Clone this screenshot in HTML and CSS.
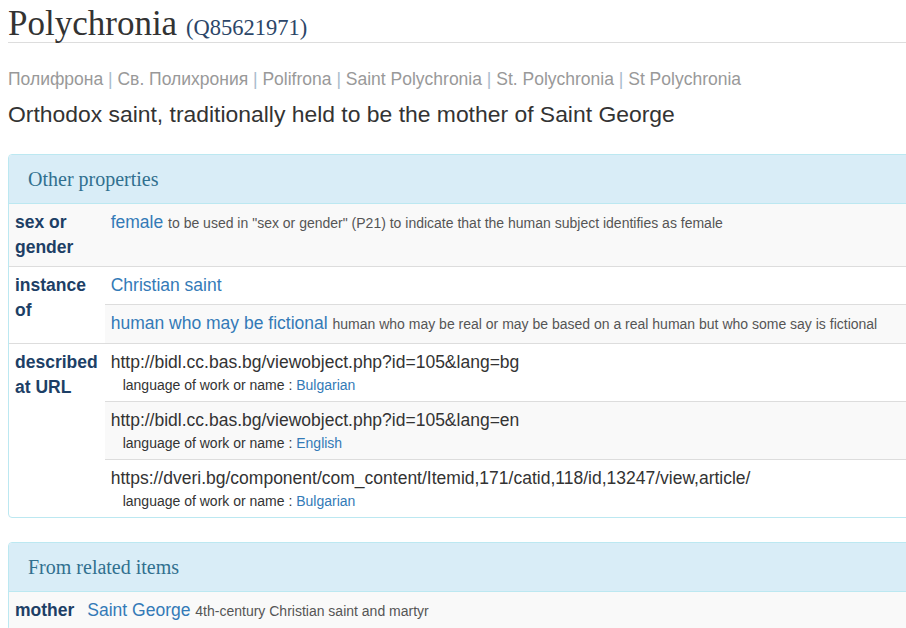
FILE: index.html
```html
<!DOCTYPE html>
<html>
<head>
<meta charset="utf-8">
<link rel="stylesheet" href="styles.css">
</head>
<body>
<div class="page">
  <h1 class="title">Polychronia <small class="qid">(Q85621971)</small></h1>
  <div class="aliases">Полифрона <span class="sep">|</span> Св. Полихрония <span class="sep">|</span> Polifrona <span class="sep">|</span> Saint Polychronia <span class="sep">|</span> St. Polychronia <span class="sep">|</span> St Polychronia</div>
  <div class="desc">Orthodox saint, traditionally held to be the mother of Saint George</div>

  <div class="panel">
    <div class="panel-heading">Other properties</div>
    <table class="props">
      <tr class="odd">
        <th class="label">sex or gender</th>
        <td class="vals">
          <div class="val"><a class="link">female</a> <span class="note">to be used in "sex or gender" (P21) to indicate that the human subject identifies as female</span></div>
        </td>
      </tr>
      <tr>
        <th class="label">instance of</th>
        <td class="vals">
          <div class="val"><a class="link">Christian saint</a></div>
          <div class="val stripe"><a class="link">human who may be fictional</a> <span class="note">human who may be real or may be based on a real human but who some say is fictional</span></div>
        </td>
      </tr>
      <tr>
        <th class="label">described at URL</th>
        <td class="vals">
          <div class="val"><span class="url">http://bidl.cc.bas.bg/viewobject.php?id=105&amp;lang=bg</span>
            <div class="qual">language of work or name : <a class="qlink">Bulgarian</a></div></div>
          <div class="val stripe"><span class="url">http://bidl.cc.bas.bg/viewobject.php?id=105&amp;lang=en</span>
            <div class="qual">language of work or name : <a class="qlink">English</a></div></div>
          <div class="val"><span class="url">https://dveri.bg/component/com_content/Itemid,171/catid,118/id,13247/view,article/</span>
            <div class="qual">language of work or name : <a class="qlink">Bulgarian</a></div></div>
        </td>
      </tr>
    </table>
  </div>

  <div class="panel">
    <div class="panel-heading">From related items</div>
    <table class="props">
      <tr class="odd">
        <th class="label">mother</th>
        <td class="vals">
          <div class="val"><a class="link">Saint George</a> <span class="note">4th-century Christian saint and martyr</span></div>
        </td>
      </tr>
    </table>
  </div>
</div>
</body>
</html>
```

FILE: styles.css
```css
html, body {
  margin: 0;
  padding: 0;
  overflow: hidden;
  background: #fff;
}
body {
  font-family: "Liberation Sans", Arial, sans-serif;
  font-size: 17.5px;
  color: #333;
}
.page {
  width: 1100px;
  padding: 5px 8px 0 8px;
}
.title {
  margin: 0;
  font-family: "Liberation Serif", "Times New Roman", serif;
  font-weight: normal;
  font-size: 35px;
  line-height: 37px;
  color: #333;
  border-bottom: 1px solid #ddd;
}
.qid {
  font-size: 22.5px;
  line-height: 1;
  color: #2c4668;
}
.aliases {
  margin-top: 24px;
  font-size: 17.5px;
  line-height: 24px;
  color: #999;
}
.sep {
  color: #a9bccc;
}
.desc {
  margin-top: 8px;
  font-size: 22.9px;
  line-height: 30px;
  color: #333;
}
.panel {
  margin-top: 25px;
  border: 1px solid #bce8f1;
  border-radius: 4px;
  background: #fff;
  overflow: hidden;
}
.panel + .panel {
  margin-top: 24px;
}
.panel-heading {
  background: #d9edf7;
  border-bottom: 1px solid #bce8f1;
  height: 49px;
  box-sizing: border-box;
  padding: 0 19px;
  display: flex;
  align-items: center;
  font-family: "Liberation Serif", "Times New Roman", serif;
  font-size: 20px;
  color: #31708f;
}
.props {
  width: 100%;
  border-collapse: collapse;
}
.props tr + tr > th,
.props tr + tr > td {
  border-top: 1px solid #ddd;
}
.props tr.odd {
  background: #f9f9f9;
}
.label {
  width: 1%;
  text-align: left;
  vertical-align: top;
  padding: 6px 7px 6px 6px;
  font-weight: bold;
  color: #1d3f66;
  line-height: 25px;
}
.vals {
  padding: 0;
  vertical-align: top;
}
.val {
  padding: 6px 6px;
  line-height: 25px;
}
.val + .val {
  border-top: 1px solid #ddd;
}
.val.stripe {
  background: #f9f9f9;
}
.link {
  color: #337ab7;
  text-decoration: none;
}
.note {
  font-size: 14px;
  color: #555;
}
.url {
  color: #333;
}
.qual {
  padding-left: 12px;
  font-size: 14px;
  line-height: 20px;
  color: #333;
}
.qlink {
  color: #337ab7;
}
```
